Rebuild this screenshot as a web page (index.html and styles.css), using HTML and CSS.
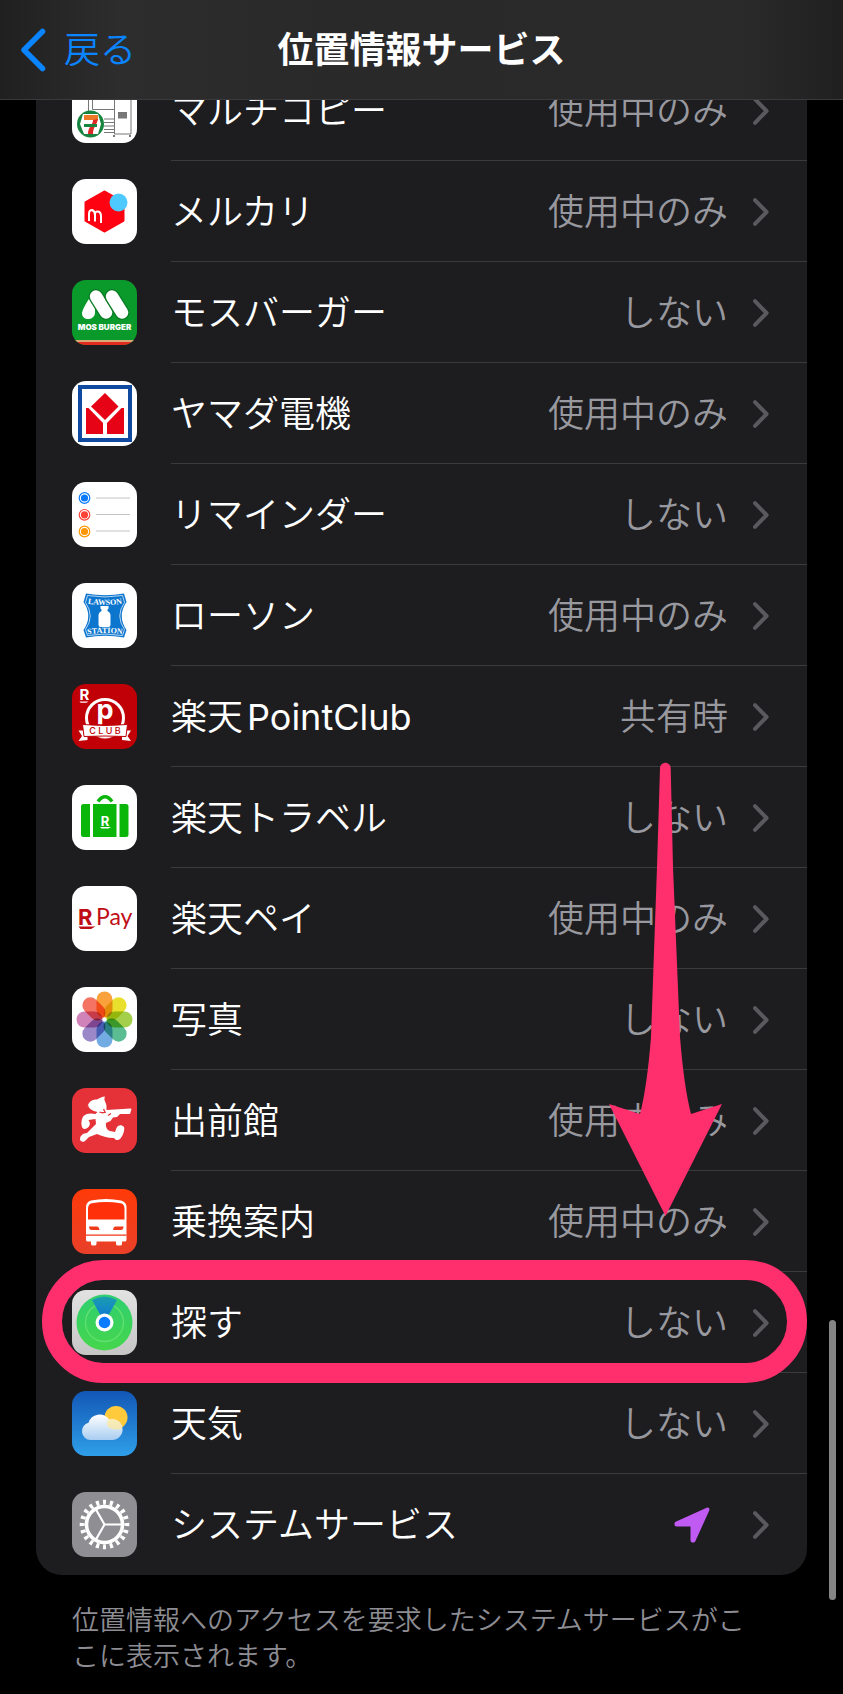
FILE: index.html
```html
<!DOCTYPE html>
<html lang="ja">
<head>
<meta charset="utf-8">
<meta name="viewport" content="width=device-width, initial-scale=1">
<title>位置情報サービス</title>
<link rel="stylesheet" href="styles.css">
</head>
<body>
<svg class="defs" aria-hidden="true">
  <defs>
    <symbol id="chevron" viewBox="0 0 16 28"><path d="M2 2.2 13.6 14 2 25.8" fill="none" stroke="currentColor" stroke-width="4" stroke-linecap="round" stroke-linejoin="round"/></symbol>
    <linearGradient id="trainBg" x1="0" y1="0" x2="0" y2="1"><stop offset="0" stop-color="#ff3a08"/><stop offset="1" stop-color="#e8402a"/></linearGradient>
    <linearGradient id="findBg" x1="0" y1="0" x2="0" y2="1"><stop offset="0" stop-color="#e2e2e2"/><stop offset="1" stop-color="#c6c6c6"/></linearGradient>
    <linearGradient id="findGreen" x1="0" y1="0" x2="0" y2="1"><stop offset="0" stop-color="#30cf70"/><stop offset="1" stop-color="#45d64c"/></linearGradient>
    <linearGradient id="beam" x1="0" y1="0" x2="0" y2="1"><stop offset="0" stop-color="#1b9fae"/><stop offset="1" stop-color="#0d6fdc"/></linearGradient>
    <linearGradient id="sky" x1="0" y1="0" x2="0" y2="1"><stop offset="0" stop-color="#1257b5"/><stop offset="1" stop-color="#2f9fe9"/></linearGradient>
    <linearGradient id="cloud" x1="0" y1="0" x2="0" y2="1"><stop offset="0" stop-color="#fff"/><stop offset="1" stop-color="#a9cdf1"/></linearGradient>
  </defs>
</svg>

<header class="navbar">
  <a class="back" href="#">
    <svg class="back-icon" viewBox="0 0 26 44" aria-hidden="true"><path d="M22.5 3.5 4 22 22.5 40.500" fill="none" stroke="currentColor" stroke-width="5.500" stroke-linecap="round" stroke-linejoin="round"/></svg>
    <span>戻る</span>
  </a>
  <h1 class="title">位置情報サービス</h1>
</header>

<main class="content">
  <ul class="list">
    <li class="row"><a class="link" href="#">
      <svg class="icon" viewBox="0 0 65 65" aria-hidden="true"><rect width="65" height="65" fill="#fff"/><g fill="none" stroke="#777" stroke-width="1"><path d="M16.500 10V33M20.500 10V31.500H42M42.500 10V56H59V10M32 41h10M32 44.500h10M32 48h10M32 51.500h10M32 54.500h10"/><path d="M41 58h2M57 58h2" stroke-width="2"/></g><rect x="46" y="34" width="9" height="6.500" fill="#777"/><circle cx="18.500" cy="46" r="13.500" fill="#17843f"/><path d="M11 36h15l3 10-3 10H12L8 46z" fill="#fff"/><path d="M12 37h14v5H12z" fill="#ee7a28"/><path d="m21 42 5-1c-1 6-5 8-5 15h-5c0-7 5-9 5-14z" fill="#dd2a26"/><path d="M12 46h13v3H12z" fill="#17843f"/></svg>
      <span class="name">マルチコピー</span><span class="value">使用中のみ</span><svg class="chevron" aria-hidden="true"><use href="#chevron"/></svg></a></li>
    <li class="row"><a class="link" href="#">
      <svg class="icon" viewBox="0 0 65 65" aria-hidden="true"><rect width="65" height="65" fill="#fff"/><path d="M32.500 13 51 23.500V41.500L32.500 52 14 41.500V23.500z" fill="#ff0211" stroke="#ff0211" stroke-width="3" stroke-linejoin="round"/><circle cx="46.500" cy="23.500" r="9" fill="#4dc9ff"/><path d="M17 42V35q0-4 3-4 3 1 3 5V42.500M23 36q0-4 3-3.500 3 .5 3 5V44" fill="none" stroke="#fff" stroke-width="2"/></svg>
      <span class="name">メルカリ</span><span class="value">使用中のみ</span><svg class="chevron" aria-hidden="true"><use href="#chevron"/></svg></a></li>
    <li class="row"><a class="link" href="#">
      <svg class="icon" viewBox="0 0 65 65" aria-hidden="true"><rect width="65" height="65" fill="#0a9a2b"/><rect y="60" width="65" height="2" fill="#d8a878"/><rect y="62" width="65" height="3" fill="#e22b1f"/><path d="M23 10C19 16 11 27 10 33c0 8 12 8 13 0z" fill="#fff"/><g stroke-linecap="round"><path d="m24 16.500 10 16" stroke="#0a7a25" stroke-width="15"/><path d="m24 16.500 10 16" stroke="#fff" stroke-width="12.500"/><path d="m40 16.500 10 16" stroke="#0a7a25" stroke-width="15"/><path d="m40 16.500 10 16" stroke="#fff" stroke-width="12.500"/></g><text class="mos" x="32.500" y="50" text-anchor="middle">MOS BURGER</text></svg>
      <span class="name">モスバーガー</span><span class="value">しない</span><svg class="chevron" aria-hidden="true"><use href="#chevron"/></svg></a></li>
    <li class="row"><a class="link" href="#">
      <svg class="icon" viewBox="0 0 65 65" aria-hidden="true"><rect width="65" height="65" fill="#fff"/><rect x="8" y="6" width="50" height="53" fill="none" stroke="#1049a0" stroke-width="4"/><path d="M33 12 46.500 25.500 33 39 19 25.500z" fill="#e60315"/><path d="M14 27h2.500L31 42v11H14zM52 27h-2.500L35 42v11h17z" fill="#e60315"/></svg>
      <span class="name">ヤマダ電機</span><span class="value">使用中のみ</span><svg class="chevron" aria-hidden="true"><use href="#chevron"/></svg></a></li>
    <li class="row"><a class="link" href="#">
      <svg class="icon" viewBox="0 0 65 65" aria-hidden="true"><rect width="65" height="65" fill="#fff"/><g fill="none" stroke-width="1.200"><circle cx="12.500" cy="16" r="5.300" stroke="#0a7bff"/><circle cx="12.500" cy="32.800" r="5.300" stroke="#ff4238"/><circle cx="12.500" cy="49.500" r="5.300" stroke="#ff9500"/></g><circle cx="12.500" cy="16" r="3.600" fill="#0a7bff"/><circle cx="12.500" cy="32.800" r="3.600" fill="#ff4238"/><circle cx="12.500" cy="49.500" r="3.600" fill="#ff9500"/><path d="M24 16h34M24 32.500h34M24 49h34" stroke="#c4c4c6"/></svg>
      <span class="name">リマインダー</span><span class="value">しない</span><svg class="chevron" aria-hidden="true"><use href="#chevron"/></svg></a></li>
    <li class="row"><a class="link" href="#">
      <svg class="icon" viewBox="0 0 65 65" aria-hidden="true"><rect width="65" height="65" fill="#fff"/><path d="M14 10.500Q33 14 52 10.500L54.500 19Q45 33 54.500 47L52 54.500Q33 51 14 54.500L11.500 47Q21 33 11.500 19z" fill="#0c75ce"/><path d="M15.500 12.500Q33 15.500 50.500 12.500L52.500 19.500Q43 33 52.500 46.500L50.500 52.500Q33 49.500 15.500 52.500L13.500 46.500Q23 33 13.500 19.500z" fill="none" stroke="#fff" stroke-width=".7"/><path id="lawsonTop" d="M15 20.500Q33 23.500 51 20.500" fill="none"/><path id="lawsonEnd" d="M14.500 51.500Q33 48.500 51.500 51.500" fill="none"/><text class="lawson"><textPath href="#lawsonTop" startOffset="50%" text-anchor="middle">LAWSON</textPath></text><text class="lawson"><textPath href="#lawsonEnd" startOffset="50%" text-anchor="middle">STATION</textPath></text><path d="M28.500 23h8v2.500l-1 1v1.500q3 1.500 3 4V42q0 2-2 2h-8q-2 0-2-2V32q0-2.500 3-4v-1.500l-1-1z" fill="#fff"/></svg>
      <span class="name">ローソン</span><span class="value">使用中のみ</span><svg class="chevron" aria-hidden="true"><use href="#chevron"/></svg></a></li>
    <li class="row"><a class="link" href="#">
      <svg class="icon" viewBox="0 0 65 65" aria-hidden="true"><rect width="65" height="65" fill="#c00006"/><circle cx="33" cy="34" r="18.500" fill="none" stroke="#fff" stroke-width="3"/><text class="club-r" x="7.500" y="16">R</text><path d="M7.500 17.500h9l-2 1.300H8.500z" fill="#fff"/><text class="club-p" x="33" y="34.500" text-anchor="middle">p</text><path d="M6.500 46.500h9V56l-9 1 3.500-5zM59 46.500h-9V56l9 1-3.500-5z" fill="#fff"/><path d="M10.500 40.500Q33 42.500 55.500 40.500L54 52.500Q33 51.500 12 52.500z" fill="#fff" stroke="#c00006"/><path d="M26 53.500h14q-7 2-14 0z" fill="#fff"/><text class="club" x="33" y="50" text-anchor="middle">C L U B</text></svg>
      <span class="name">楽天<span class="latin">PointClub</span></span><span class="value">共有時</span><svg class="chevron" aria-hidden="true"><use href="#chevron"/></svg></a></li>
    <li class="row"><a class="link" href="#">
      <svg class="icon" viewBox="0 0 65 65" aria-hidden="true"><rect width="65" height="65" fill="#fff"/><g fill="#0bb60b"><path d="M11.500 19H18v33h-6.500q-2.500 0-2.500-2.500v-28Q9 19 11.500 19zM21 19h23.500v33H21zM47.500 19H54q2.500 0 2.500 2.500v28Q56.500 52 54 52h-6.500z"/></g><path d="M26 16.500q7-9.500 14 0" fill="none" stroke="#0bb60b" stroke-width="3.500"/><text class="travel-r" x="33" y="41" text-anchor="middle">R</text><path d="M28 42h11l-2.500 1.600h-7z" fill="#fff"/></svg>
      <span class="name">楽天トラベル</span><span class="value">しない</span><svg class="chevron" aria-hidden="true"><use href="#chevron"/></svg></a>
      <svg class="arrow" viewBox="0 0 113 454" aria-hidden="true"><path d="M51 6a5.300 5.300 0 0 1 10.700 0L64 105 71 275Q75 325 82 352L113 342 56.500 454 0 342 31 352Q38 325 42 275L48 105z" fill="#ff2f6e"/></svg></li>
    <li class="row"><a class="link" href="#">
      <svg class="icon" viewBox="0 0 65 65" aria-hidden="true"><rect width="65" height="65" fill="#fff"/><text class="pay-r" x="6" y="39">R</text><path d="M6.500 40.500H23.500L19 43H8.500z" fill="#bf0d16"/><text class="pay" x="24" y="39">Pay</text></svg>
      <span class="name">楽天ペイ</span><span class="value">使用中のみ</span><svg class="chevron" aria-hidden="true"><use href="#chevron"/></svg></a></li>
    <li class="row"><a class="link" href="#">
      <svg class="icon photos" viewBox="0 0 65 65" aria-hidden="true"><rect width="65" height="65" fill="#fff"/><rect class="petal" x="24.500" y="4.500" width="16" height="26" rx="8" fill="#f9a13a"/><rect class="petal" x="24.500" y="4.500" width="16" height="26" rx="8" fill="#e8e02c" transform="rotate(45 32.500 32.500)"/><rect class="petal" x="24.500" y="4.500" width="16" height="26" rx="8" fill="#a4cf4a" transform="rotate(90 32.500 32.500)"/><rect class="petal" x="24.500" y="4.500" width="16" height="26" rx="8" fill="#5cbd93" transform="rotate(135 32.500 32.500)"/><rect class="petal" x="24.500" y="4.500" width="16" height="26" rx="8" fill="#72ace3" transform="rotate(180 32.500 32.500)"/><rect class="petal" x="24.500" y="4.500" width="16" height="26" rx="8" fill="#9b88c9" transform="rotate(225 32.500 32.500)"/><rect class="petal" x="24.500" y="4.500" width="16" height="26" rx="8" fill="#cf83b8" transform="rotate(270 32.500 32.500)"/><rect class="petal" x="24.500" y="4.500" width="16" height="26" rx="8" fill="#f47362" transform="rotate(315 32.500 32.500)"/></svg>
      <span class="name">写真</span><span class="value">しない</span><svg class="chevron" aria-hidden="true"><use href="#chevron"/></svg></a></li>
    <li class="row"><a class="link" href="#">
      <svg class="icon" viewBox="0 0 65 65" aria-hidden="true"><rect width="65" height="65" fill="#e53138"/><g fill="#fff"><path d="M15.500 20c0-5 4-9 9-8.500 2 0 3-2.500 8.500-3-1 2-.5 3.500 0 5 2 3 1.500 7 1.500 8.500l24-1.500 1 .5-1.500 5H48l-3 3-4 .5-2.500 3.500-4.500 2c-.5 4 1 7 4 8l5 1 1.500-4c1-3 5-4 7.500-1 1 3-1 9-4 12-2 2-5 1-6-1-7 0-12-2-17-4l-8 3-3 3c-2 3-6 2-6-1 0-3 3-6 7-6l5-5 4-4-.5-5-7 1 1 2c2 4-4 9-7 6-2-4-1-9 1-12 3-3 8-3 12-2l2-2c-5-1-9-3-9.500-7.500z"/></g><path d="M27.500 24q3 1.500 6 0M31.500 21l2 4M36 27.500l3-2" fill="none" stroke="#e53138" stroke-width="1.300"/></svg>
      <span class="name">出前館</span><span class="value">使用中のみ</span><svg class="chevron" aria-hidden="true"><use href="#chevron"/></svg></a></li>
    <li class="row"><a class="link" href="#">
      <svg class="icon" viewBox="0 0 65 65" aria-hidden="true"><rect width="65" height="65" fill="url(#trainBg)"/><path d="M14 18Q14 13 19 11.500 34 8.500 49 11.500 54.500 13 54.500 18V51q0 1.500-2 1.500H50V55q0 1.500-2 1.500H46q-2 0-2-1.500v-2.500H24.500V55q0 1.500-2 1.500H21q-2 0-2-1.500v-2.500H16q-2 0-2-1.500z" fill="#fff"/><path d="M16 20q0-5 4-5.700 14-2.500 28.500 0 4 .7 4 5.700V30.500H16z" fill="#ff300a"/><path d="M17 37.500h8q2 0 2.500 3.500H20q-3 0-3-3.500zM51.500 37.500h-8q-2 0-2.500 3.500h7.500q3 0 3-3.500zM14 45.500h40.500v1.200H14z" fill="#f03a1a"/></svg>
      <span class="name">乗換案内</span><span class="value">使用中のみ</span><svg class="chevron" aria-hidden="true"><use href="#chevron"/></svg></a></li>
    <li class="row row-marked"><a class="link" href="#">
      <svg class="icon" viewBox="0 0 65 65" aria-hidden="true"><rect width="65" height="65" fill="url(#findBg)"/><circle cx="32.500" cy="32.500" r="28" fill="url(#findGreen)"/><circle cx="32.500" cy="32.500" r="19" fill="none" stroke="#62e070" stroke-width="1.300"/><path d="M32.500 32.500 20 10Q32.500 3 45 10z" fill="url(#beam)"/><circle cx="32.500" cy="32.500" r="9" fill="#fff"/><circle cx="32.500" cy="32.500" r="5.800" fill="#0a7bff"/></svg>
      <span class="name">探す</span><span class="value">しない</span><svg class="chevron" aria-hidden="true"><use href="#chevron"/></svg></a></li>
    <li class="row"><a class="link" href="#">
      <svg class="icon" viewBox="0 0 65 65" aria-hidden="true"><rect width="65" height="65" fill="url(#sky)"/><circle cx="44" cy="26.500" r="11.500" fill="#ffcb3d"/><path d="M18.500 49a8.800 8.800 0 0 1-2-17.300A11.500 11.500 0 0 1 37 28.500 10.500 10.500 0 1 1 41 49z" fill="url(#cloud)"/><path d="M36 29q5-3 10 1 4 3 4 8-8 2-14-2-2-4 0-7z" fill="#ffe89a" opacity=".7"/></svg>
      <span class="name">天気</span><span class="value">しない</span><svg class="chevron" aria-hidden="true"><use href="#chevron"/></svg></a></li>
    <li class="row"><a class="link" href="#">
      <svg class="icon" viewBox="0 0 65 65" aria-hidden="true"><rect width="65" height="65" fill="#8e8e93"/><g fill="none" stroke="#fff"><circle cx="32.500" cy="32.500" r="22.300" stroke-width="5" pathLength="200" stroke-dasharray="4.400 5.600" stroke-dashoffset="2.200"/><circle cx="32.500" cy="32.500" r="18" stroke-width="3.600"/><path d="M32.500 32.500H50M32.500 32.500 23.800 17.300M32.500 32.500 23.800 47.700" stroke-width="2.200"/></g></svg>
      <span class="name">システムサービス</span><svg class="location" viewBox="0 0 36 36" role="img" aria-label="使用中"><path d="M33.500 2.500 19.500 33.500H18.500V17.500H2.500V16.500z" fill="#bf5af2" stroke="#bf5af2" stroke-width="4" stroke-linejoin="round"/></svg><svg class="chevron" aria-hidden="true"><use href="#chevron"/></svg></a></li>
  </ul>
  <p class="note">位置情報へのアクセスを要求したシステムサービスがここに表示されます。</p>
</main>
<div class="scrollbar" aria-hidden="true"></div>
</body>
</html>
```

FILE: styles.css
```css
* {
  box-sizing: border-box;
}

body {
  position: relative;
  margin: 0;
  min-height: 100vh;
  background: #000;
  color: #fff;
  font-family: Inter, "Noto Sans CJK JP", sans-serif;
  font-size: 36px;
  font-weight: 350;
  line-height: 48px;
}

.defs {
  position: absolute;
  width: 0;
  height: 0;
}

a {
  color: inherit;
  text-decoration: none;
}

.navbar {
  position: sticky;
  top: 0;
  z-index: 5;
  display: grid;
  grid-template-columns: 1fr auto 1fr;
  align-items: center;
  height: 100px;
  padding: 0 20px;
  border-bottom: 1px solid #3a3a3c;
  background: linear-gradient(90deg, #202021, #2d2d2e 14%, #29292a 40%, #2a2a2b 88%, #202021);
}

.back {
  display: flex;
  align-items: center;
  gap: 18px;
  color: #0a84ff;
}

.back-icon {
  width: 26px;
  height: 44px;
}

.title {
  margin: 0;
  font-size: 36px;
  font-weight: 700;
}

.content {
  padding: 0 36px;
}

.list {
  margin: -40px 0 0;
  padding: 0;
  list-style: none;
  border-radius: 0 0 26px 26px;
  background: #1d1c1f;
}

.row {
  position: relative;
}

.link {
  display: grid;
  grid-template-columns: 65px 1fr auto 16px;
  align-items: center;
  height: 101px;
  padding: 0 38px 0 36px;
}

/* Hairline that starts at the label column */
.row:not(:last-child)::before {
  content: "";
  position: absolute;
  right: 0;
  bottom: 0;
  left: 135px;
  height: 1px;
  background: #3b3b3e;
}

.icon {
  width: 65px;
  height: 65px;
  border-radius: 14px;
}

.name {
  padding-left: 34px;
}

.latin {
  margin-left: 4px;
  font-weight: 400;
}

.value {
  margin-right: 25px;
  color: #98989f;
}

.chevron {
  width: 16px;
  height: 28px;
  color: #5a5a5e;
}

.location {
  width: 36px;
  height: 36px;
  margin-right: 43px;
}

.note {
  margin: 28px 44px 0 36px;
  color: #8d8d93;
  font-size: 27px;
  line-height: 36px;
}

.scrollbar {
  position: absolute;
  right: 7px;
  bottom: 94px;
  z-index: 4;
  width: 7px;
  height: 280px;
  border-radius: 4px;
  background: #858585;
}

/* Annotations over the list */
.arrow {
  position: absolute;
  top: -5px;
  right: 85px;
  z-index: 2;
  width: 113px;
  height: 454px;
  pointer-events: none;
}

.row-marked::after {
  content: "";
  position: absolute;
  inset: -12px 0 -10px 6px;
  z-index: 2;
  border: 20px solid #ff2f6e;
  border-radius: 62px;
  pointer-events: none;
}

/* Lettering inside app icons */
.mos {
  fill: #fff;
  font: 900 8px Inter, sans-serif;
}

.lawson {
  fill: #fff;
  font: 700 8px "Liberation Serif", serif;
}

.club-r {
  fill: #fff;
  font: 700 15px Inter, sans-serif;
}

.club-p {
  fill: #fff;
  font: 700 27px Inter, sans-serif;
}

.club {
  fill: #c00006;
  font: 500 9px Inter, sans-serif;
}

.travel-r {
  fill: #fff;
  font: 700 13px Inter, sans-serif;
}

.pay-r {
  fill: #bf0d16;
  font: 700 22px Inter, sans-serif;
}

.pay {
  fill: #bf0d16;
  font: 400 23px Lato, sans-serif;
}

.photos {
  isolation: isolate;
}

.petal {
  mix-blend-mode: multiply;
}
```
